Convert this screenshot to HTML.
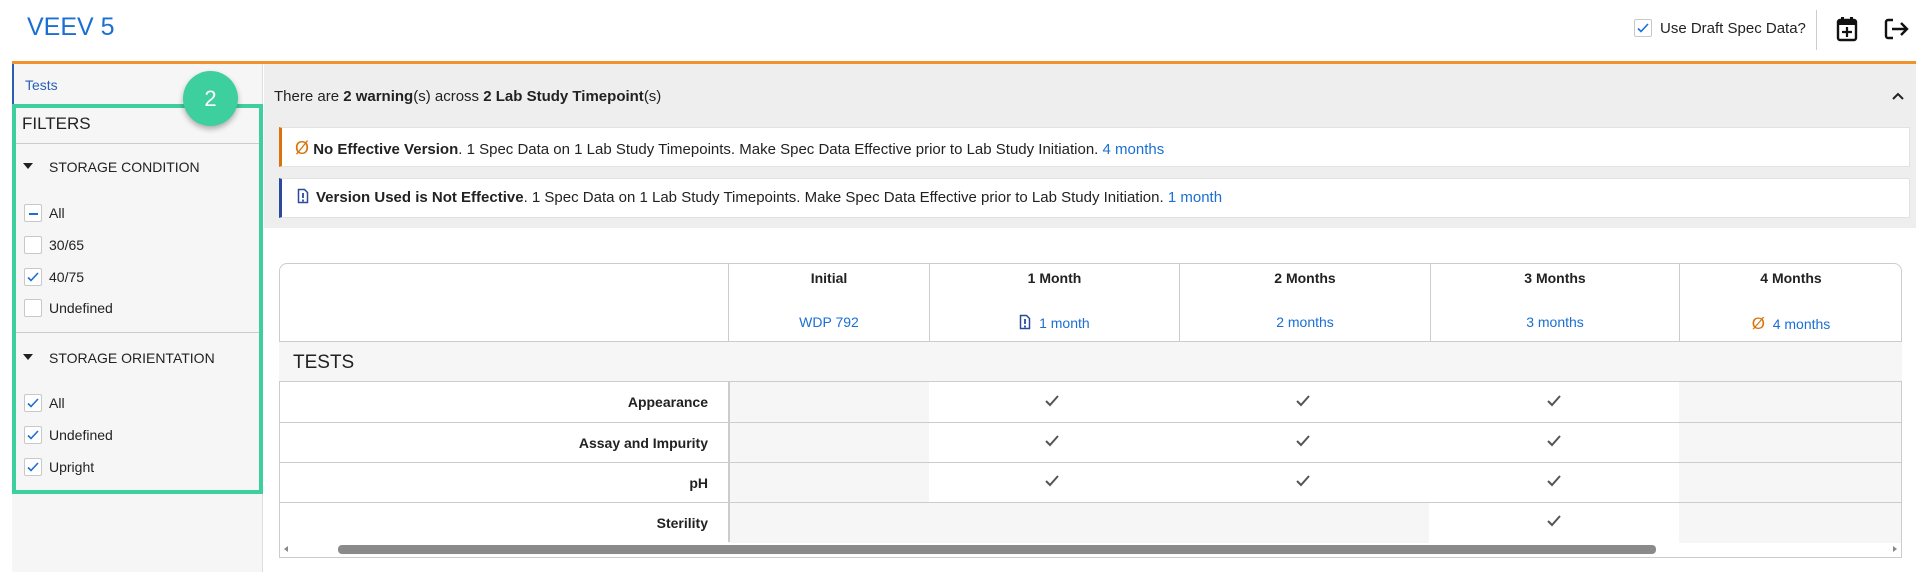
<!DOCTYPE html>
<html><head><meta charset="utf-8"><style>
*{box-sizing:border-box;margin:0;padding:0}
body{width:1916px;height:572px;overflow:hidden;background:#fff;font-family:"Liberation Sans",Arial,sans-serif;color:#222;position:relative;font-size:14px}
.a{position:absolute}
.blue{color:#1a6fd4}
.cb{position:absolute;width:18px;height:18px;border:1px solid #c8c8c8;border-radius:2px;background:#fff}
.lbl{position:absolute;font-size:14px;color:#222}
.hdr{position:absolute;top:263px;height:78px;border-left:1px solid #ccc;text-align:center}
.hdr b{position:absolute;left:0;right:0;top:7px;font-size:14px}
.hdr span{position:absolute;left:0;right:0;top:51px;font-size:14px;color:#1a6fd4}
.row{position:absolute;left:279px;width:1623px;height:41px;border-top:1px solid #ccc}
.rl{position:absolute;left:0;width:449px;text-align:right;padding-right:20px;top:12px;font-weight:bold;font-size:14px}
.g{position:absolute;top:0;height:40px;background:#f6f6f6}
</style></head><body>
<div class="a blue" style="left:27px;top:13px;font-size:25px">VEEV 5</div>
<div class="cb" style="left:1634px;top:19px"><svg width="16" height="16" viewBox="0 0 16 16" style="position:absolute;left:0;top:0"><path d="M3 8.5l3 3 7-7.5" fill="none" stroke="#1a6fd4" stroke-width="1.6"/></svg></div>
<div class="a" style="left:1660px;top:20px;font-size:15px">Use Draft Spec Data?</div>
<div class="a" style="left:1816px;top:10px;width:1px;height:40px;background:#ccc"></div>
<svg class="a" style="left:1836px;top:16px" width="22" height="26" viewBox="0 0 22 26"><rect x="2" y="4" width="18" height="20" rx="2" fill="none" stroke="#111" stroke-width="2.4"/><rect x="2" y="4" width="18" height="5" fill="#111"/><rect x="5" y="1" width="3" height="5" fill="#111"/><rect x="14" y="1" width="3" height="5" fill="#111"/><path d="M11 11v10M6 16h10" stroke="#111" stroke-width="2.2"/></svg>
<svg class="a" style="left:1884px;top:18px" width="26" height="22" viewBox="0 0 26 22"><path d="M9 2H4a2 2 0 0 0-2 2v14a2 2 0 0 0 2 2h5" fill="none" stroke="#111" stroke-width="2.4"/><path d="M8 11h15M17 5l6 6-6 6" fill="none" stroke="#111" stroke-width="2.4"/></svg>
<div class="a" style="left:12px;top:61px;width:1904px;height:3px;background:#f0932b"></div>
<!-- sidebar -->
<div class="a" style="left:12px;top:64px;width:251px;height:508px;background:#f6f6f6;border-right:1px solid #ddd"></div>
<div class="a" style="left:12px;top:64px;width:2px;height:40px;background:#2b5fb5"></div>
<div class="a" style="left:25px;top:77px;font-size:14px;color:#2b5fb5">Tests</div>
<div class="a" style="left:12px;top:104px;width:251px;height:390px;border:4px solid #3ecf9e"></div>
<div class="a" style="left:22px;top:114px;font-size:17px">FILTERS</div>
<div class="a" style="left:16px;top:143px;width:243px;height:1px;background:#ccc"></div>
<div class="a" style="left:23px;top:163px;border-left:5px solid transparent;border-right:5px solid transparent;border-top:6px solid #222"></div>
<div class="a" style="left:49px;top:159px;font-size:14px">STORAGE CONDITION</div>
<div class="cb" style="left:24px;top:204px"><div class="a" style="left:4px;top:8px;width:9px;height:2px;background:#1a6fd4"></div></div><div class="lbl" style="left:49px;top:205px">All</div>
<div class="cb" style="left:24px;top:236px"></div><div class="lbl" style="left:49px;top:237px">30/65</div>
<div class="cb" style="left:24px;top:268px"><svg width="16" height="16" style="position:absolute"><path d="M3 8.5l3 3 7-7.5" fill="none" stroke="#1a6fd4" stroke-width="1.6"/></svg></div><div class="lbl" style="left:49px;top:269px">40/75</div>
<div class="cb" style="left:24px;top:299px"></div><div class="lbl" style="left:49px;top:300px">Undefined</div>
<div class="a" style="left:16px;top:332px;width:243px;height:1px;background:#ccc"></div>
<div class="a" style="left:23px;top:354px;border-left:5px solid transparent;border-right:5px solid transparent;border-top:6px solid #222"></div>
<div class="a" style="left:49px;top:350px;font-size:14px">STORAGE ORIENTATION</div>
<div class="cb" style="left:24px;top:394px"><svg width="16" height="16" style="position:absolute"><path d="M3 8.5l3 3 7-7.5" fill="none" stroke="#1a6fd4" stroke-width="1.6"/></svg></div><div class="lbl" style="left:49px;top:395px">All</div>
<div class="cb" style="left:24px;top:426px"><svg width="16" height="16" style="position:absolute"><path d="M3 8.5l3 3 7-7.5" fill="none" stroke="#1a6fd4" stroke-width="1.6"/></svg></div><div class="lbl" style="left:49px;top:427px">Undefined</div>
<div class="cb" style="left:24px;top:458px"><svg width="16" height="16" style="position:absolute"><path d="M3 8.5l3 3 7-7.5" fill="none" stroke="#1a6fd4" stroke-width="1.6"/></svg></div><div class="lbl" style="left:49px;top:459px">Upright</div>
<div class="a" style="left:183px;top:71px;width:55px;height:55px;border-radius:50%;background:#3ecf9e;box-shadow:0 3px 6px rgba(0,0,0,.3);color:#fff;font-size:22px;text-align:center;line-height:55px">2</div>
<!-- warnings -->
<div class="a" style="left:264px;top:64px;width:1652px;height:164px;background:#eeeeee"></div>
<div class="a" style="left:274px;top:88px;font-size:15px">There are <b>2 warning</b>(s) across <b>2 Lab Study Timepoint</b>(s)</div>
<svg class="a" style="left:1892px;top:92px" width="12" height="8"><path d="M1 7l5-5 5 5" fill="none" stroke="#222" stroke-width="2"/></svg>
<div class="a" style="left:279px;top:127px;width:1631px;height:40px;background:#fff;border:1px solid #e2e2e2;border-left:3px solid #d9730d"></div>
<div class="a" style="left:295px;top:138px;font-size:15px"><span style="color:#d9730d;font-size:18px">Ø</span> <b>No Effective Version</b>. 1 Spec Data on 1 Lab Study Timepoints. Make Spec Data Effective prior to Lab Study Initiation. <span class="blue">4 months</span></div>
<div class="a" style="left:279px;top:178px;width:1631px;height:40px;background:#fff;border:1px solid #e2e2e2;border-left:3px solid #2b4a9b"></div>
<svg class="a" style="left:297px;top:188px" width="12" height="16" viewBox="0 0 12 16"><path d="M1.5 1.5h6l3 3v10h-9z" fill="none" stroke="#2b4a9b" stroke-width="1.5"/><path d="M6 5v5M6 11.5v2" stroke="#2b4a9b" stroke-width="1.8"/></svg>
<div class="a" style="left:316px;top:189px;font-size:15px"><b>Version Used is Not Effective</b>. 1 Spec Data on 1 Lab Study Timepoints. Make Spec Data Effective prior to Lab Study Initiation. <span class="blue">1 month</span></div>
<!-- table -->
<div class="a" style="left:279px;top:263px;width:1623px;height:295px;border:1px solid #ccc;border-radius:8px 8px 0 0;overflow:hidden"></div>
<div class="hdr" style="left:728px;width:201px"><b>Initial</b><span>WDP 792</span></div>
<div class="hdr" style="left:929px;width:250px"><b>1 Month</b><span><svg width="12" height="16" viewBox="0 0 12 16" style="vertical-align:-2px"><path d="M1.5 1.5h6l3 3v10h-9z" fill="none" stroke="#2b4a9b" stroke-width="1.5"/><path d="M6 5v5M6 11.5v2" stroke="#2b4a9b" stroke-width="1.8"/></svg>&nbsp; 1 month</span></div>
<div class="hdr" style="left:1179px;width:251px"><b>2 Months</b><span>2 months</span></div>
<div class="hdr" style="left:1430px;width:249px"><b>3 Months</b><span>3 months</span></div>
<div class="hdr" style="left:1679px;width:223px"><b>4 Months</b><span><span style="position:static;color:#d9730d;font-size:17px">Ø</span>&nbsp; 4 months</span></div>
<div class="row" style="top:341px;background:#f6f6f6;height:40px"><div class="a" style="left:14px;top:10px;font-size:19px">TESTS</div></div>
<div class="row" style="top:381px"><div class="rl">Appearance</div><div class="g" style="left:449px;width:201px"></div><div class="g" style="left:1400px;width:222px"></div></div>
<div class="row" style="top:422px"><div class="rl">Assay and Impurity</div><div class="g" style="left:449px;width:201px"></div><div class="g" style="left:1400px;width:222px"></div></div>
<div class="row" style="top:462px"><div class="rl">pH</div><div class="g" style="left:449px;width:201px"></div><div class="g" style="left:1400px;width:222px"></div></div>
<div class="row" style="top:502px"><div class="rl">Sterility</div><div class="g" style="left:449px;width:701px"></div><div class="g" style="left:1400px;width:222px"></div></div>
<div class="a" style="left:728px;top:381px;width:2px;height:161px;background:#ccc"></div>
<svg class="a" style="left:0;top:0" width="1916" height="572">
<g fill="none" stroke="#555" stroke-width="2">
<path d="M1046 401l4 4 8-9M1297 401l4 4 8-9M1548 401l4 4 8-9"/>
<path d="M1046 441l4 4 8-9M1297 441l4 4 8-9M1548 441l4 4 8-9"/>
<path d="M1046 481l4 4 8-9M1297 481l4 4 8-9M1548 481l4 4 8-9"/>
<path d="M1548 521l4 4 8-9"/>
</g>
<path d="M284 549l4-3v6z" fill="#888"/><path d="M1897 549l-4-3v6z" fill="#888"/>
<rect x="338" y="545" width="1318" height="9" rx="4" fill="#8a8a8a"/>
</svg>
</body></html>
